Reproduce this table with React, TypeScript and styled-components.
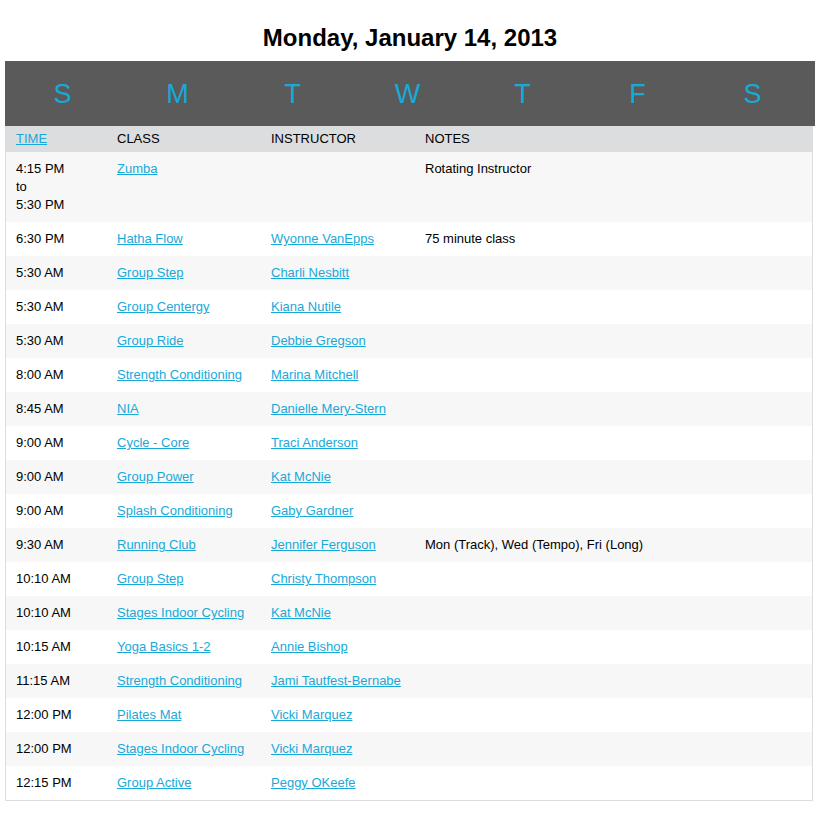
import React from 'react';
import styled, { createGlobalStyle } from 'styled-components';

const GlobalStyle = createGlobalStyle`
  body {
    margin: 0;
    background: #fff;
    font-family: "Liberation Sans", Arial, Helvetica, sans-serif;
    color: #000;
  }
`;

const Page = styled.div`
  width: 810px;
  padding: 0 5px;
`;

const Title = styled.h1`
  margin: 0;
  padding-top: 24px;
  height: 37px;
  font-size: 24px;
  line-height: 28px;
  font-weight: bold;
  text-align: center;
`;

const DayBar = styled.div`
  display: grid;
  grid-template-columns: repeat(7, 115px);
  height: 65px;
  background: #5a5a5a;
  align-items: center;
`;

const Day = styled.div`
  text-align: center;
  color: #18a9d9;
  font-size: 27px;
  line-height: 30px;
`;

const Table = styled.table`
  width: 808px;
  border-collapse: collapse;
  border: 1px solid #dcdcdc;
  border-top: none;
  font-size: 13px;
  table-layout: fixed;
`;

const HeadRow = styled.tr`
  background: #dcdddf;
`;

const Th = styled.th<{ $w?: number }>`
  width: ${p => (p.$w ? `${p.$w}px` : 'auto')};
  text-align: left;
  font-weight: normal;
  padding: 4px 0 4px 10px;
  line-height: 18px;
  height: 18px;
`;

const Row = styled.tr<{ $alt: boolean }>`
  background: ${p => (p.$alt ? '#f7f7f7' : '#fff')};
`;

const Td = styled.td`
  padding: 8px 0 8px 10px;
  line-height: 18px;
  vertical-align: top;
`;

const Link = styled.a`
  color: #18a9d9;
  text-decoration: underline;
`;

const days = ['S', 'M', 'T', 'W', 'T', 'F', 'S'];

type Entry = { time: string[]; cls: string; who?: string; notes?: string };

const entries: Entry[] = [
  { time: ['4:15 PM', 'to', '5:30 PM'], cls: 'Zumba', notes: 'Rotating Instructor' },
  { time: ['6:30 PM'], cls: 'Hatha Flow', who: 'Wyonne VanEpps', notes: '75 minute class' },
  { time: ['5:30 AM'], cls: 'Group Step', who: 'Charli Nesbitt' },
  { time: ['5:30 AM'], cls: 'Group Centergy', who: 'Kiana Nutile' },
  { time: ['5:30 AM'], cls: 'Group Ride', who: 'Debbie Gregson' },
  { time: ['8:00 AM'], cls: 'Strength Conditioning', who: 'Marina Mitchell' },
  { time: ['8:45 AM'], cls: 'NIA', who: 'Danielle Mery-Stern' },
  { time: ['9:00 AM'], cls: 'Cycle - Core', who: 'Traci Anderson' },
  { time: ['9:00 AM'], cls: 'Group Power', who: 'Kat McNie' },
  { time: ['9:00 AM'], cls: 'Splash Conditioning', who: 'Gaby Gardner' },
  { time: ['9:30 AM'], cls: 'Running Club', who: 'Jennifer Ferguson', notes: 'Mon (Track), Wed (Tempo), Fri (Long)' },
  { time: ['10:10 AM'], cls: 'Group Step', who: 'Christy Thompson' },
  { time: ['10:10 AM'], cls: 'Stages Indoor Cycling', who: 'Kat McNie' },
  { time: ['10:15 AM'], cls: 'Yoga Basics 1-2', who: 'Annie Bishop' },
  { time: ['11:15 AM'], cls: 'Strength Conditioning', who: 'Jami Tautfest-Bernabe' },
  { time: ['12:00 PM'], cls: 'Pilates Mat', who: 'Vicki Marquez' },
  { time: ['12:00 PM'], cls: 'Stages Indoor Cycling', who: 'Vicki Marquez' },
  { time: ['12:15 PM'], cls: 'Group Active', who: 'Peggy OKeefe' },
];

export default function App() {
  return (
    <Page>
      <GlobalStyle />
      <Title>Monday, January 14, 2013</Title>
      <DayBar>
        {days.map((d, i) => (
          <Day key={i}>{d}</Day>
        ))}
      </DayBar>
      <Table>
        <thead>
          <HeadRow>
            <Th $w={91}><Link href="#">TIME</Link></Th>
            <Th $w={144}>CLASS</Th>
            <Th $w={144}>INSTRUCTOR</Th>
            <Th>NOTES</Th>
          </HeadRow>
        </thead>
        <tbody>
          {entries.map((e, i) => (
            <Row key={i} $alt={i % 2 === 0}>
              <Td>
                {e.time.map((t, j) => (
                  <div key={j}>{t}</div>
                ))}
              </Td>
              <Td><Link href="#">{e.cls}</Link></Td>
              <Td>{e.who && <Link href="#">{e.who}</Link>}</Td>
              <Td>{e.notes}</Td>
            </Row>
          ))}
        </tbody>
      </Table>
    </Page>
  );
}
